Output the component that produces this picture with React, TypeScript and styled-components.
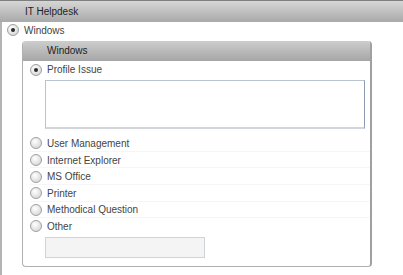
import styled, { createGlobalStyle } from "styled-components";

const GlobalStyle = createGlobalStyle`
  html, body {
    margin: 0;
    padding: 0;
    background: #fff;
  }
  body {
    font-family: "Liberation Sans", Arial, sans-serif;
    font-size: 10px;
    color: #3a3a3a;
  }
`;

const Page = styled.div`
  width: 403px;
  height: 275px;
  overflow: hidden;
  display: flex;
  flex-direction: column;
`;

const TopBar = styled.div`
  height: 21px;
  border-top: 1px solid #7f7f7f;
  background: linear-gradient(#d6d6d6, #a9a9a9);
  display: flex;
  align-items: center;
  padding-left: 25px;
  font-size: 10px;
  color: #1e1e1e;
`;

const Body = styled.div`
  flex: 1;
  border-left: 2px solid #b4b4b4;
  padding: 0 0 0 5px;
  display: flex;
  flex-direction: column;
`;

const Option = styled.label<{ $first?: boolean }>`
  display: flex;
  align-items: center;
  gap: 5px;
  height: 16.6px;
  font-size: 10px;
  color: #444;
  border-top: 1px solid ${(p) => (p.$first ? "transparent" : "#f6f6f6")};
  margin-top: -1px;
`;

const Radio = styled.span<{ $checked?: boolean }>`
  width: 10px;
  height: 10px;
  border-radius: 50%;
  border: 1px solid #a0a0a0;
  background: radial-gradient(circle at 40% 35%, #ffffff, #dcdcdc 70%, #c8c8c8);
  display: flex;
  align-items: center;
  justify-content: center;
  flex-shrink: 0;
  &::after {
    content: "";
    width: 4px;
    height: 4px;
    border-radius: 50%;
    background: #2a2a2a;
    display: ${(p) => (p.$checked ? "block" : "none")};
  }
`;

const Panel = styled.div`
  margin: 2px 0 0 15px;
  width: 347px;
  height: 225px;
  border: 1px solid #b0b0b0;
  border-right: 2px solid #a0a0a0;
  border-top: none;
  border-radius: 4px;
  display: flex;
  flex-direction: column;
  overflow: hidden;
`;

const PanelHeader = styled.div`
  height: 20px;
  background: linear-gradient(#cdcdcd, #a6a6a6);
  display: flex;
  align-items: center;
  padding-left: 24px;
  font-size: 10px;
  color: #1e1e1e;
`;

const PanelBody = styled.div`
  padding: 1px 0 0 7px;
  display: flex;
  flex-direction: column;
`;

const TextArea = styled.div`
  margin: 2px 0 6px 15px;
  width: 318px;
  height: 46px;
  border: 1px solid #b8c4d0;
  border-right-color: #8a9cae;
  border-bottom: 2px solid #d2d6da;
  background: #fff;
`;

const TextInput = styled.div`
  margin: 2px 0 0 15px;
  width: 158px;
  height: 19px;
  border: 1px solid #cfd4d9;
  background: #f4f4f4;
`;

const items = [
  "User Management",
  "Internet Explorer",
  "MS Office",
  "Printer",
  "Methodical Question",
  "Other",
];

export default function App() {
  return (
    <Page>
      <GlobalStyle />
      <TopBar>IT Helpdesk</TopBar>
      <Body>
        <Option $first>
          <Radio $checked />
          Windows
        </Option>
        <Panel>
          <PanelHeader>Windows</PanelHeader>
          <PanelBody>
            <Option $first>
              <Radio $checked />
              Profile Issue
            </Option>
            <TextArea />
            {items.map((item, i) => (
              <Option key={item} $first={i === 0}>
                <Radio />
                {item}
              </Option>
            ))}
            <TextInput />
          </PanelBody>
        </Panel>
      </Body>
    </Page>
  );
}
